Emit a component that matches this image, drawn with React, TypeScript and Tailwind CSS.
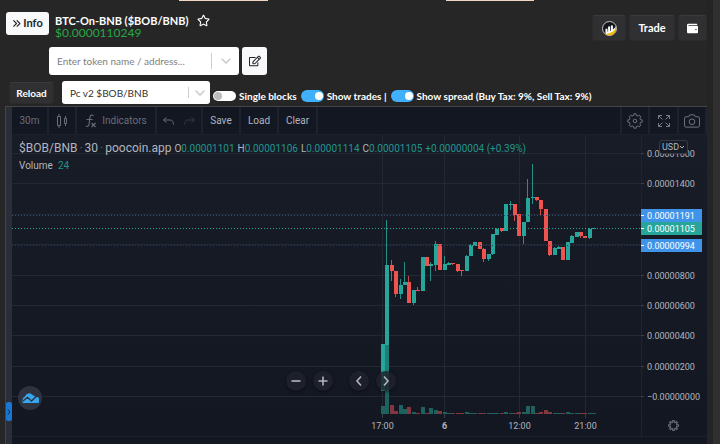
import React from "react";
import { FaRegStar, FaWallet, FaRegEdit } from "react-icons/fa";
import { FaAnglesRight } from "react-icons/fa6";

type Candle = [up: 0 | 1, top: number, bottom: number, high: number, low: number, volume: number];

const candles: Candle[] = [
  [1, 344, 391, 344, 391, 8],
  [1, 265, 391, 220, 391, 69],
  [0, 265, 271, 260, 281, 9],
  [0, 271, 294, 271, 297, 3],
  [1, 285, 294, 279, 299, 9],
  [1, 282, 285, 262, 285, 5],
  [0, 282, 303, 276, 303, 7],
  [1, 290, 303, 290, 305, 2],
  [0, 290, 291, 287, 291, 1],
  [1, 257, 291, 257, 291, 7],
  [0, 257, 266, 257, 266, 1],
  [1, 264, 266, 262, 281, 6],
  [1, 244, 265, 241, 271, 4],
  [0, 244, 270, 244, 270, 3],
  [1, 264, 270, 256, 270, 2],
  [1, 263, 265, 262, 265, 1],
  [0, 263, 264, 263, 265, 1],
  [0, 264, 271, 264, 272, 1],
  [0, 270, 271, 270, 276, 1],
  [1, 256, 271, 255, 271, 2],
  [1, 245, 256, 244, 256, 1],
  [1, 242, 246, 242, 246, 1],
  [0, 242, 249, 242, 249, 1],
  [0, 249, 259, 248, 262, 1],
  [1, 254, 259, 254, 261, 1],
  [1, 234, 254, 234, 255, 1],
  [1, 229, 235, 228, 235, 1],
  [0, 228, 231, 228, 232, 1],
  [1, 204, 231, 204, 231, 2],
  [1, 204, 205, 201, 210, 1],
  [0, 204, 215, 204, 221, 1],
  [0, 214, 236, 214, 236, 2],
  [1, 222, 236, 222, 244, 2],
  [1, 198, 222, 179, 222, 8],
  [1, 197, 198, 164, 204, 8],
  [0, 197, 200, 197, 201, 1],
  [0, 200, 209, 200, 215, 2],
  [0, 209, 241, 209, 241, 4],
  [0, 241, 255, 241, 256, 2],
  [1, 248, 255, 247, 255, 1],
  [1, 247, 249, 246, 249, 1],
  [0, 247, 260, 247, 260, 1],
  [1, 242, 260, 242, 260, 2],
  [1, 236, 243, 235, 243, 1],
  [1, 232, 237, 232, 237, 1],
  [0, 232, 236, 232, 238, 1],
  [0, 236, 238, 236, 238, 1],
  [1, 229, 238, 228, 239, 1],
  [1, 228, 229, 228, 229, 1],
];

const TEAL = "#26a69a";
const RED = "#ef5350";

const priceRows: [y: number, label: string][] = [
  [153, "0.00001600"],
  [183, "0.00001400"],
  [214, ""],
  [244, ""],
  [275, "0.00000800"],
  [305, "0.00000600"],
  [335, "0.00000400"],
  [366, "0.00000200"],
  [396, "−0.00000000"],
];

const timeCols: [x: number, label: string, bold: boolean][] = [
  [382, "17:00", false],
  [444, "6", true],
  [519, "12:00", false],
  [585, "21:00", false],
];

const markers: [y: number, label: string, color: string][] = [
  [215, "0.00001191", "#3f94e9"],
  [245, "0.00000994", "#3f94e9"],
  [228, "0.00001105", "#26a69a"],
];

function Plot() {
  return (
    <svg className="block h-[301px] w-full" role="img" aria-label="Price and volume chart">
      <g transform="translate(-12 -135)" shapeRendering="crispEdges">
        {priceRows.map(([y]) => (
          <rect key={y} x={12} y={y} width="100%" height={1} fill="#242833" />
        ))}
        {timeCols.map(([x]) => (
          <rect key={x} x={x} y={135} width={1} height={279} fill="#242833" />
        ))}
        {timeCols.map(([x]) => (
          <rect key={x} x={x} y={414} width={1} height={4} fill="#3a3e49" />
        ))}
        {candles.map(([up, , , , , v], i) => (
          <rect
            key={i}
            x={Math.round(381 + 4.4 * i)}
            y={414 - v}
            width={4}
            height={v}
            fill={up ? "#1e625f" : "#83363b"}
          />
        ))}
        {candles.map(([up, top, bottom, high, low], i) => {
          const x = Math.round(381 + 4.4 * i);
          const color = up ? TEAL : RED;
          return (
            <g key={i} fill={color}>
              <rect x={x + 1} y={high} width={1} height={low - high} opacity={0.85} />
              <rect x={x} y={top} width={4} height={bottom - top} />
            </g>
          );
        })}
        <rect x={385} y={345} width={4} height={46} fill="#1f7f78" />
        <line x1={12} x2="102%" y1={215.5} y2={215.5} stroke="#2b4f7c" strokeDasharray="1 2" />
        <line x1={12} x2="102%" y1={228.5} y2={228.5} stroke="#26a69a" strokeDasharray="1 2" />
        <line x1={12} x2="102%" y1={245.5} y2={245.5} stroke="#263f63" strokeDasharray="1 2" />
      </g>
      <g transform="translate(-12 -135)" fill="#b2b5be" fontSize={9} textAnchor="middle">
        {timeCols.map(([x, label, bold]) => (
          <text key={x} x={x + 0.5} y={429} fontWeight={bold ? 700 : 400}>
            {label}
          </text>
        ))}
      </g>
    </svg>
  );
}

function PriceAxis() {
  return (
    <div className="relative w-[66px] shrink-0">
      <svg className="block h-[301px] w-full" role="img" aria-label="Price scale">
        <g transform="translate(-641 -135)" fontSize={9}>
          <rect x={641} y={135} width={1} height={301} fill="#20242f" />
          {priceRows
            .filter(([, label]) => label)
            .map(([y, label]) => (
              <g key={y}>
                <rect x={641} y={y} width={3} height={1} fill="#3a3e49" />
                <text x={647} y={y + 4} fill="#b2b5be">
                  {label}
                </text>
              </g>
            ))}
          {markers.map(([y, label, color]) => (
            <g key={y}>
              <rect x={641} y={y - 6} width={61} height={13} fill={color} />
              <rect x={641} y={y} width={3} height={1} fill="#fff" />
              <text x={647} y={y + 4} fill="#fff">
                {label}
              </text>
            </g>
          ))}
        </g>
      </svg>
      <button className="absolute top-[5px] left-[18px] flex h-[14px] w-[29px] items-center justify-center rounded-[3px] border border-[#363a45] bg-[#171b26] text-[9px] leading-none text-[#b2b5be]">
        USD
        <svg className="h-[4px] w-[6px]" viewBox="0 0 6 4" fill="none" stroke="currentColor">
          <path d="M1 1l2 2 2-2" />
        </svg>
      </button>
      <button aria-label="Scale settings" className="absolute top-[285px] left-[27px] text-[#6a6d78]">
        <Gear size={11} teeth={8} plain />
      </button>
    </div>
  );
}

function Gear({ size, teeth, plain }: { size: number; teeth: number; plain?: boolean }) {
  const points: string[] = [];
  const step = (Math.PI * 2) / teeth;
  const root = plain ? 5.4 : 6.4;
  for (let i = 0; i < teeth; i++) {
    const a = i * step - Math.PI / 2;
    [
      [-0.3, root],
      [-0.2, 8.2],
      [0.2, 8.2],
      [0.3, root],
    ].forEach(([offset, r]) => {
      points.push(`${9 + r * Math.cos(a + offset * step)},${9 + r * Math.sin(a + offset * step)}`);
    });
  }
  return (
    <svg width={size} height={size} viewBox="0 0 18 18" fill="none" stroke="currentColor" strokeWidth={plain ? 1.8 : 1} strokeLinejoin="round">
      <polygon points={points.join(" ")} />
      {!plain && <circle cx="9" cy="9" r="2" />}
    </svg>
  );
}

function Chevron() {
  return (
    <svg className="h-[6px] w-[10px]" viewBox="0 0 10 6" fill="none" stroke="#cccccc" strokeWidth="1.6" strokeLinecap="round">
      <path d="M1 1l4 4 4-4" />
    </svg>
  );
}

function Toggle({ label, on }: { label: string; on?: boolean }) {
  return (
    <label className="flex items-center gap-[3px] whitespace-nowrap">
      <input
        type="checkbox"
        defaultChecked={on}
        className="relative h-[10px] w-[23px] appearance-none rounded-full bg-white before:absolute before:top-[1px] before:left-[1px] before:size-[8px] before:rounded-full before:bg-[#bdbdbd] checked:h-[12px] checked:bg-[#40b0fa] checked:before:top-[2px] checked:before:left-[14px] checked:before:bg-white"
      />
      {label}
    </label>
  );
}

const toolButton = "flex h-[27px] items-center justify-center border-r-2 border-[#1e222d]";

function Toolbar() {
  return (
    <div className="flex h-[28px] items-start border-b border-[#1c202b] bg-[#131722] text-[10px] text-[#b2b5be]">
      <button className={`${toolButton} w-[37px] text-[#6a6d78]`}>30m</button>
      <button aria-label="Candles" className={`${toolButton} w-[28px] text-[#6a6d78]`}>
        <svg width="12" height="14" viewBox="0 0 12 14" fill="none" stroke="currentColor">
          <path d="M1.500 2.500h3v9h-3zM3 0v2.500M3 11.500v2.500M8.500 4.500h2v5h-2zM9.500 2v2.500M9.500 9.500v2.500" />
        </svg>
      </button>
      <button className={`${toolButton} w-[80px] gap-[6px] text-[#6a6d78]`}>
        <svg width="11" height="14" viewBox="0 0 11 14" fill="none" stroke="currentColor" strokeWidth="1.100">
          <path d="M8.500 1.800C7.500.5 5.300.5 5 3L4 10.500c-.3 2-2 2.200-3 1.400M1.500 5.500h6M6.500 9l4 4M10.500 9l-4 4" />
        </svg>
        Indicators
      </button>
      <div className="flex h-[27px] w-[46px] items-center justify-center gap-[10px] border-r-2 border-[#1e222d]">
        <button aria-label="Undo" className="text-[#6a6d78]">
          <svg width="11" height="8" viewBox="0 0 11 8" fill="none" stroke="currentColor">
            <path d="M3.500.5l-3 2.500 3 2.500M.5 3H7c2.500 0 3.500 2 3.500 4.500" />
          </svg>
        </button>
        <button aria-label="Redo" className="text-[#343843]">
          <svg width="11" height="8" viewBox="0 0 11 8" fill="none" stroke="currentColor">
            <path d="M7.500.5l3 2.500-3 2.500M10.500 3H4C1.500 3 .5 5 .5 7.500" />
          </svg>
        </button>
      </div>
      <button className={`${toolButton} w-[38px]`}>Save</button>
      <button className={`${toolButton} w-[38px]`}>Load</button>
      <button className={`${toolButton} w-[39px]`}>Clear</button>
      <div className="flex-1" />
      <button aria-label="Settings" className={`${toolButton} w-[30px] border-l-2 text-[#787b86]`}>
        <Gear size={16} teeth={8} />
      </button>
      <button aria-label="Full screen" className={`${toolButton} w-[29px] text-[#787b86]`}>
        <svg width="12" height="12" viewBox="0 0 12 12" fill="none" stroke="currentColor">
          <path d="M.5 4V.5H4M8 .5h3.500V4M11.500 8v3.500H8M4 11.500H.5V8M.5.5l4 4M11.500.5l-4 4M11.500 11.500l-4-4M.5 11.500l4-4" />
        </svg>
      </button>
      <button aria-label="Take a snapshot" className={`${toolButton} w-[28px] border-r-0 text-[#787b86]`}>
        <svg width="16" height="14" viewBox="0 0 17 14" fill="none" stroke="currentColor">
          <path d="M5 2.500L6 .5h5l1 2h3c.8 0 1.500.7 1.500 1.500v8c0 .8-.7 1.500-1.500 1.500H2c-.8 0-1.500-.7-1.500-1.500V4c0-.8.7-1.500 1.500-1.500z" />
          <circle cx="8.500" cy="7.800" r="3" />
        </svg>
      </button>
    </div>
  );
}

const navButton =
  "flex size-[20px] items-center justify-center rounded-full bg-[#1e222d]/85 text-[#b2b5be] shadow-[0_1px_3px_rgba(0,0,0,0.5)]";

function NavIcon({ d }: { d: string }) {
  return (
    <svg width="12" height="12" viewBox="0 0 12 12" fill="none" stroke="currentColor" strokeWidth="1.600">
      <path d={d} />
    </svg>
  );
}

function Chart() {
  const ohlc = [
    ["O", "0.00001101"],
    ["H", "0.00001106"],
    ["L", "0.00001114"],
    ["C", "0.00001105"],
  ];
  return (
    <section className="flex flex-1 border-t border-l border-[#454545] bg-[#161a25] font-[Roboto,sans-serif]">
      <div className="relative w-[6px] shrink-0 bg-[#2a2e39]">
        <button aria-label="Show drawing tools" className="absolute top-[295px] left-0 flex h-[19px] w-[6px] items-center justify-center rounded-[2px] bg-[#1976d2]">
          <svg width="4" height="6" viewBox="0 0 4 6" fill="none" stroke="#10294a">
            <path d="M1 .5L3 3 1 5.500" />
          </svg>
        </button>
      </div>
      <div className="flex min-w-0 flex-1 flex-col">
        <Toolbar />
        <div className="flex bg-linear-to-b from-[#181c27] to-[#131722]">
          <div className="relative min-w-0 flex-1">
            <Plot />
            <div className="absolute top-[4px] left-[7px] whitespace-nowrap text-[#b2b5be]">
              <div className="flex h-[17px] items-center gap-[3px]">
                <h2 className="flex gap-[2px] text-[12px]">
                  <span>$BOB/BNB</span>
                  <span className="text-[#5d606b]">·</span>
                  <span>30</span>
                  <span className="text-[#5d606b]">·</span>
                  <span>poocoin.app</span>
                </h2>
                <p className="flex gap-[3px] pt-[2px] text-[10px]">
                  {ohlc.map(([k, v]) => (
                    <span key={k}>
                      {k}
                      <span className="text-[#22958b]">{v}</span>
                    </span>
                  ))}
                  <span className="text-[#22958b]">+0.00000004 (+0.39%)</span>
                </p>
              </div>
              <p className="flex h-[18px] items-center gap-[5px] text-[10px]">
                Volume <span className="text-[#22958b]">24</span>
              </p>
            </div>
            <div className="absolute top-[236px] left-[274px] flex">
              <button aria-label="Zoom out" className={navButton}>
                <NavIcon d="M1.500 6h9" />
              </button>
              <button aria-label="Zoom in" className={`${navButton} ml-[7px]`}>
                <NavIcon d="M1.500 6h9M6 1.500v9" />
              </button>
              <button aria-label="Scroll left" className={`${navButton} ml-[16px]`}>
                <NavIcon d="M8 1.500L4 6l4 4.500" />
              </button>
              <button aria-label="Scroll right" className={`${navButton} ml-[7px]`}>
                <NavIcon d="M4 1.500L8 6l-4 4.500" />
              </button>
            </div>
            <a href="#chart" aria-label="Chart provider" className="absolute top-[251px] left-[6px] flex size-[24px] items-center justify-center rounded-full bg-[#2f3340]">
              <svg width="17" height="11" viewBox="0 0 17 11">
                <path d="M1 10a2.500 2.500 0 0 1-.5-3A4 4 0 0 1 3 3.500 4.300 4.300 0 0 1 10.500 2 3.500 3.500 0 0 1 13.500 4.500 3 3 0 0 1 16 10z" fill="#37a6ef" />
                <path d="M.5 8.500L5.500 4.300l4 3.700 4.500-4.300" fill="none" stroke="#2f3340" strokeWidth="1.300" />
              </svg>
            </a>
          </div>
          <PriceAxis />
        </div>
        <div className="flex-1 border-t border-[#1c202b] bg-[#131722]" />
      </div>
    </section>
  );
}

const darkButton =
  "flex items-center justify-center rounded-[3px] border border-[#2b2b2d] border-t-[#3b3b3d] bg-[#303032] text-white";

export default function App() {
  return (
    <div className="flex h-screen min-h-[444px] bg-[#262626] font-[Lato,sans-serif] text-white">
      <main className="relative flex min-w-0 flex-1 flex-col pl-[5px]">
        <div className="absolute top-0 left-[179px] flex gap-[178px]">
          <div className="h-px w-[89px] bg-[#efd6c4]" />
          <div className="h-px w-[88px] bg-[#efd6c4]" />
        </div>
        <header className="mt-[12px] flex h-[29px] items-start pl-px">
          <button className="flex h-[23px] w-[43px] items-center justify-center gap-[2px] rounded-[3px] bg-[#f8f9fa] text-[11px] font-bold text-[#212529]">
            <FaAnglesRight className="size-[9px]" />
            Info
          </button>
          <div className="ml-[6px] pt-[2px]">
            <h1 className="flex items-center gap-[8px] text-[11px] leading-[13px] font-bold">
              BTC-On-BNB ($BOB/BNB)
              <FaRegStar className="size-[13px]" />
            </h1>
            <p className="text-[12px] leading-[12px] text-[#28a745]">$0.0000110249</p>
          </div>
          <div className="mt-[3px] ml-auto flex h-[26px] gap-[3px] text-[11px] font-bold">
            <button aria-label="BscScan" className={`${darkButton} w-[34px]`}>
              <svg width="15" height="15" viewBox="0 0 15 15">
                <circle cx="7.500" cy="7.500" r="7" fill="#12161c" stroke="#e8e8e8" strokeWidth=".8" />
                <path d="M3.500 12.300v-4.500h2v3l.6-.3v-5h2V10l.8-.5v-5h2v4c1.300-.9 2.200-2 2.800-3.200.6 5-3 8.900-6.600 8.900-1.500 0-2.700-.6-3.600-1.700z" fill="#fff" />
                <path d="M3.200 12.800c4.500.3 9-2.300 11-6.300.7 4-2.700 8-6.700 8-1.800 0-3.300-.7-4.300-1.700z" fill="#f0b90b" />
              </svg>
            </button>
            <button className={`${darkButton} w-[46px]`}>Trade</button>
            <button aria-label="Wallet" className={`${darkButton} w-[29px]`}>
              <FaWallet className="size-[11px]" />
            </button>
          </div>
        </header>
        <div className="mt-[6px] flex gap-[3px] pl-[44px]">
          <div className="flex h-[28px] w-[190px] items-center rounded-[3px] bg-white">
            <input
              aria-label="Search token"
              placeholder="Enter token name / address..."
              className="h-full min-w-0 flex-1 pl-[8px] text-[10px] text-[#333] outline-none placeholder:text-[#808080]"
            />
            <span className="h-[16px] w-px bg-[#cccccc]" />
            <span className="flex w-[27px] justify-center">
              <Chevron />
            </span>
          </div>
          <button aria-label="Edit address" className="flex h-[28px] w-[25px] items-center justify-center rounded-[3px] bg-[#f8f9fa] text-[#212529]">
            <FaRegEdit className="size-[12px]" />
          </button>
        </div>
        <div className="mt-[6px] flex h-[25px] items-start pl-[4px] text-[10px] font-bold">
          <button className={`${darkButton} mt-px h-[22px] w-[45px]`}>Reload</button>
          <div className="relative ml-[8px] h-[23px] w-[148px]">
            <select
              aria-label="Trading pair"
              className="h-full w-full appearance-none rounded-[3px] bg-white pt-px pl-[8px] text-[10px] font-normal text-[#333]"
            >
              <option>Pc v2 $BOB/BNB</option>
            </select>
            <span className="pointer-events-none absolute inset-y-0 right-0 flex items-center">
              <span className="h-[11px] w-px bg-[#cccccc]" />
              <span className="flex w-[21px] justify-center">
                <Chevron />
              </span>
            </span>
          </div>
          <div className="mt-[8px] ml-[3px] flex h-[14px] items-center gap-[4px]">
            <Toggle label="Single blocks" />
            <Toggle label="Show trades |" on />
            <Toggle label="Show spread (Buy Tax: 9%, Sell Tax: 9%)" on />
          </div>
        </div>
        <Chart />
      </main>
      <div className="w-[13px] shrink-0 border-l-[6px] border-[#242424] bg-[#303030]" />
    </div>
  );
}
